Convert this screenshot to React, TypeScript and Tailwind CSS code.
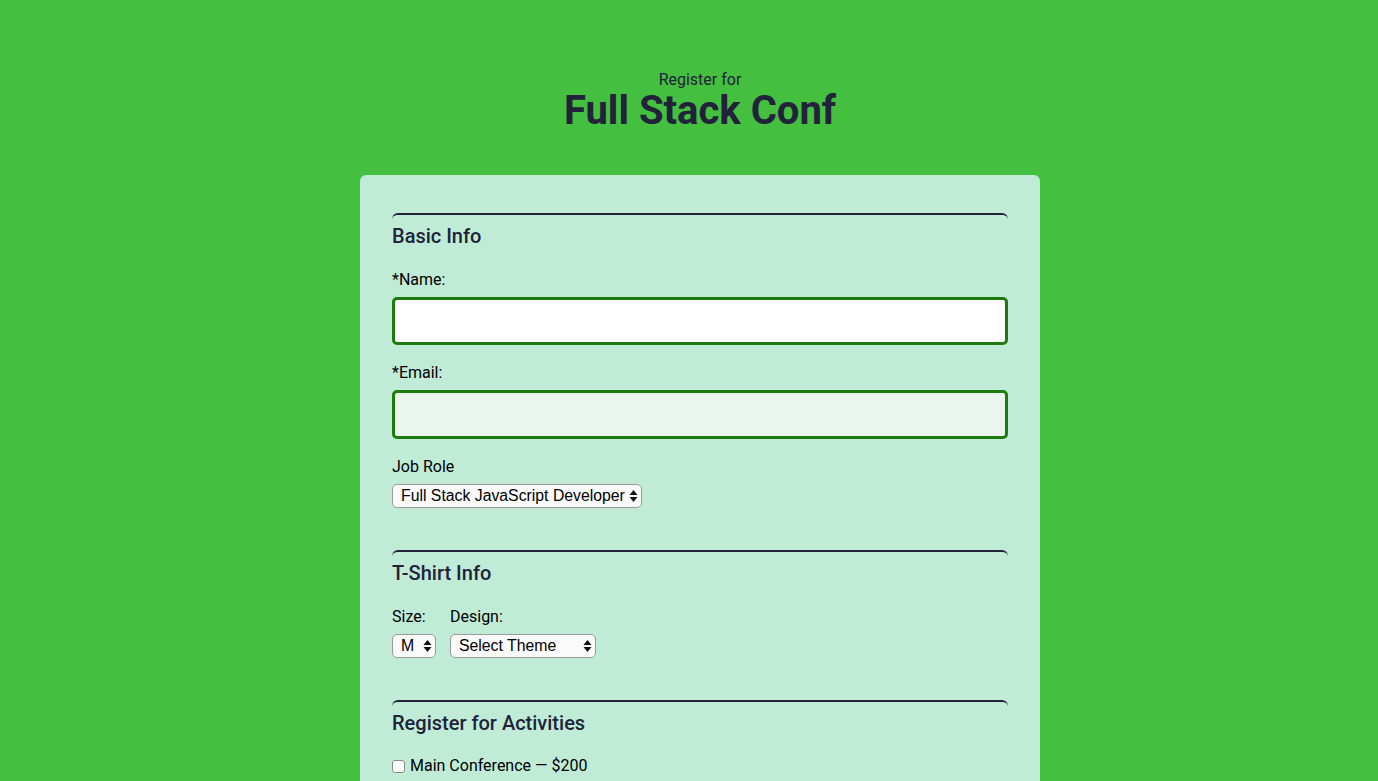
const activities = [
  { label: "Main Conference — $200" },
  { label: "JavaScript Frameworks Workshop — Tuesday 9am-12pm, $100" },
  { label: "JavaScript Libraries Workshop — Tuesday 1pm-4pm, $100" },
];

const SelectArrows = () => (
  <svg
    width="9"
    height="14"
    viewBox="0 0 9 14"
    className="pointer-events-none absolute right-[4px] top-1/2 -translate-y-1/2"
  >
    <path d="M4.5 1 L8.5 6 H0.5 Z" fill="#111" />
    <path d="M4.5 13 L8.5 8 H0.5 Z" fill="#111" />
  </svg>
);

const Select = ({ value, width }: { value: string; width: string }) => (
  <div className={`relative ${width}`}>
    <select
      defaultValue={value}
      className="h-6 w-full appearance-none rounded-[5px] border border-[#9a9a9a] bg-[#fafafa] pl-2 pr-[14px] text-[15.8px] leading-5 text-black"
      style={{ fontFamily: "'Liberation Sans', Arial, sans-serif" }}
    >
      <option>{value}</option>
    </select>
    <SelectArrows />
  </div>
);

const Section = ({
  title,
  children,
}: {
  title: string;
  children: React.ReactNode;
}) => (
  <section className="rounded-t-md border-t-2 border-[#22223b] pt-[7px]">
    <h2 className="text-[20px] font-medium leading-7 text-[#22223b]">
      {title}
    </h2>
    {children}
  </section>
);

export default function App() {
  return (
    <div
      className="min-h-screen bg-[#44bf40] pb-16 pl-[22px]"
      style={{ fontFamily: "Roboto, 'Liberation Sans', sans-serif" }}
    >
      <header className="pt-[70px] text-center text-[#22223b]">
        <p className="text-base leading-5">Register for</p>
        <h1 className="mt-[1px] text-[40px] font-bold leading-10">
          Full Stack Conf
        </h1>
      </header>

      <form className="mx-auto mt-[44px] w-[680px] rounded-md bg-[#c0ecd7] px-8 pt-[38px] pb-10 text-black">
        <Section title="Basic Info">
          <label className="mt-[18px] block text-base leading-6">*Name:</label>
          <input
            type="text"
            className="mt-[5px] block h-12 w-full rounded-[5px] border-[3px] border-[#1d7a0d] bg-white"
          />
          <label className="mt-[16px] block text-base leading-6">*Email:</label>
          <input
            type="email"
            className="mt-[5px] block h-[49px] w-full rounded-[5px] border-[3px] border-[#1d7a0d] bg-[#eaf5ee]"
          />
          <label className="mt-[16px] block text-base leading-6">Job Role</label>
          <div className="mt-[5px]">
            <Select value="Full Stack JavaScript Developer" width="w-[250px]" />
          </div>
        </Section>

        <div className="mt-[42px]">
          <Section title="T-Shirt Info">
            <div className="mt-[18px] flex gap-[14px]">
              <div>
                <label className="block text-base leading-6">Size:</label>
                <div className="mt-[5px]">
                  <Select value="M" width="w-[44px]" />
                </div>
              </div>
              <div>
                <label className="block text-base leading-6">Design:</label>
                <div className="mt-[5px]">
                  <Select value="Select Theme" width="w-[146px]" />
                </div>
              </div>
            </div>
          </Section>
        </div>

        <div className="mt-[42px]">
          <Section title="Register for Activities">
            <div className="mt-[17px] flex flex-col gap-4">
              {activities.map((a, i) => (
                <label key={i} className="flex items-center text-base leading-6">
                  <input
                    type="checkbox"
                    className="ml-0 mr-[5px] h-[13px] w-[13px] appearance-none rounded-[3px] border border-[#8a8a8a] bg-white"
                  />
                  {a.label}
                </label>
              ))}
            </div>
          </Section>
        </div>
      </form>
    </div>
  );
}
